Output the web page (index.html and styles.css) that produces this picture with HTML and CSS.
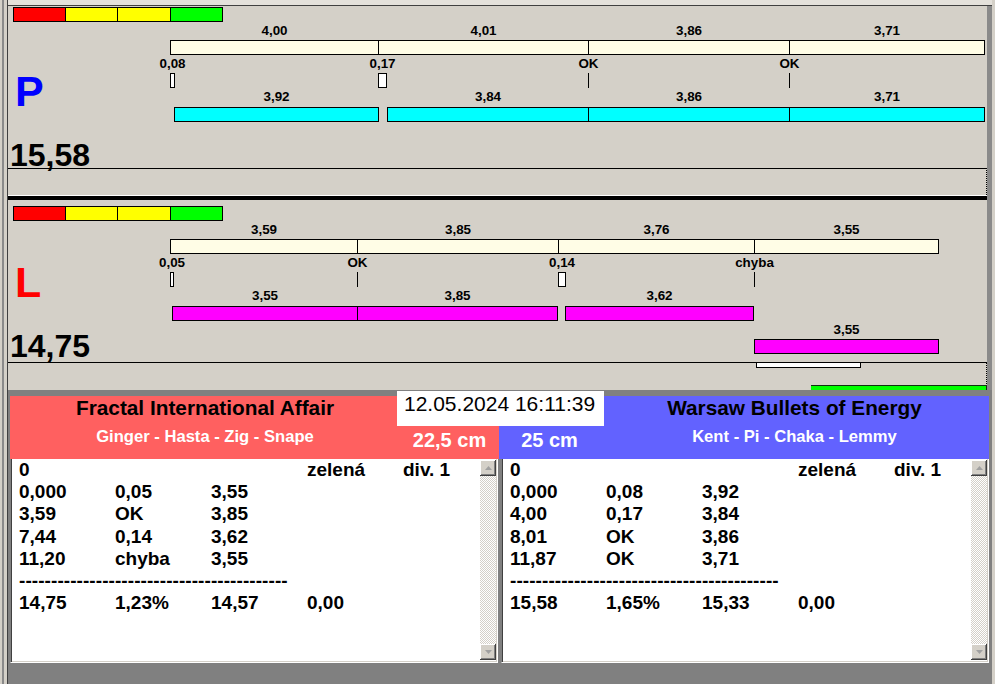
FILE: index.html
```html
<!DOCTYPE html>
<html>
<head>
<meta charset="utf-8">
<link rel="stylesheet" href="styles.css">
</head>
<body>
<div class="win">
  <div class="topbar"></div>
  <div class="main">
    <section class="lane lane-p">
      <div class="cbar"><i class="c-r"></i><i class="c-y"></i><i class="c-y c-y2"></i><i class="c-g"></i></div>
      <div class="lane-body">
        <div class="side">
          <div class="letter letter-p">P</div>
          <div class="total">15,58</div>
        </div>
        <div class="chart">
          <div class="track">
            <div class="seg" style="width:209px"><div class="lbl">4,00</div><div class="bar cream"></div><div class="bnd" style="width:5px"><span class="lbl">0,08</span><i class="mk"></i></div></div>
            <div class="seg" style="margin-left:-1px;width:211px"><div class="lbl">4,01</div><div class="bar cream"></div><div class="bnd" style="width:9px"><span class="lbl">0,17</span><i class="mk"></i></div></div>
            <div class="seg" style="margin-left:-1px;width:202px"><div class="lbl">3,86</div><div class="bar cream"></div><div class="bnd" style="width:1px"><span class="lbl">OK</span><i class="mk ln"></i></div></div>
            <div class="seg" style="margin-left:-1px;width:196px"><div class="lbl">3,71</div><div class="bar cream"></div><div class="bnd" style="width:1px"><span class="lbl">OK</span><i class="mk ln"></i></div></div>
          </div>
          <div class="track low">
            <div class="seg" style="margin-left:4px;width:205px"><div class="lbl">3,92</div><div class="bar cyan"></div></div>
            <div class="seg" style="margin-left:8px;width:202px"><div class="lbl">3,84</div><div class="bar cyan"></div></div>
            <div class="seg" style="margin-left:-1px;width:202px"><div class="lbl">3,86</div><div class="bar cyan"></div></div>
            <div class="seg" style="margin-left:-1px;width:196px"><div class="lbl">3,71</div><div class="bar cyan"></div></div>
          </div>
        </div>
      </div>
      <div class="foot foot-p"></div>
    </section>
    <div class="sep"></div>
    <section class="lane lane-l">
      <div class="cbar"><i class="c-r"></i><i class="c-y"></i><i class="c-y c-y2"></i><i class="c-g"></i></div>
      <div class="lane-body">
        <div class="side">
          <div class="letter letter-l">L</div>
          <div class="total">14,75</div>
        </div>
        <div class="chart">
          <div class="track">
            <div class="seg" style="width:188px"><div class="lbl">3,59</div><div class="bar cream"></div><div class="bnd" style="width:4px"><span class="lbl">0,05</span><i class="mk"></i></div></div>
            <div class="seg" style="margin-left:-1px;width:202px"><div class="lbl">3,85</div><div class="bar cream"></div><div class="bnd" style="width:1px"><span class="lbl">OK</span><i class="mk ln"></i></div></div>
            <div class="seg" style="margin-left:-1px;width:197px"><div class="lbl">3,76</div><div class="bar cream"></div><div class="bnd" style="width:8px"><span class="lbl">0,14</span><i class="mk"></i></div></div>
            <div class="seg" style="margin-left:-1px;width:185px"><div class="lbl">3,55</div><div class="bar cream"></div><div class="bnd" style="width:1px"><span class="lbl">chyba</span><i class="mk ln"></i></div></div>
          </div>
          <div class="track low">
            <div class="seg" style="margin-left:2px;width:186px"><div class="lbl">3,55</div><div class="bar magenta"></div></div>
            <div class="seg" style="margin-left:-1px;width:201px"><div class="lbl">3,85</div><div class="bar magenta"></div></div>
            <div class="seg" style="margin-left:7px;width:189px"><div class="lbl">3,62</div><div class="bar magenta"></div></div>
          </div>
          <div class="track extra">
            <div class="seg" style="margin-left:584px;width:185px"><div class="lbl">3,55</div><div class="bar magenta"></div></div>
          </div>
        </div>
      </div>
      <div class="foot foot-l">
        <div class="cut" style="margin-left:748px;width:105px"></div>
        <div class="gbar" style="margin-left:803px;width:176px"></div>
      </div>
    </section>
    <div class="bottom">
      <div class="teams">
        <div class="team team-red">
          <div class="t-main">
            <div class="t-title">Fractal International Affair</div>
            <div class="t-sub">Ginger - Hasta - Zig - Snape</div>
          </div>
          <div class="t-side"><span class="t-cm">22,5 cm</span></div>
        </div>
        <div class="team team-blue">
          <div class="t-side t-side-b"><span class="t-cm">25 cm</span></div>
          <div class="t-main">
            <div class="t-title">Warsaw Bullets of Energy</div>
            <div class="t-sub">Kent - Pi - Chaka - Lemmy</div>
          </div>
        </div>
        <div class="date">12.05.2024 16:11:39</div>
      </div>
      <div class="lists">
        <div class="list">
          <div class="list-body">
            <div class="row"><span>0</span><span></span><span></span><span>zelená</span><span>div. 1</span></div>
            <div class="row"><span>0,000</span><span>0,05</span><span>3,55</span></div>
            <div class="row"><span>3,59</span><span>OK</span><span>3,85</span></div>
            <div class="row"><span>7,44</span><span>0,14</span><span>3,62</span></div>
            <div class="row"><span>11,20</span><span>chyba</span><span>3,55</span></div>
            <div class="row dash">------------------------------------------</div>
            <div class="row"><span>14,75</span><span>1,23%</span><span>14,57</span><span>0,00</span></div>
          </div>
          <div class="sb">
            <div class="sb-btn"><svg width="7" height="4" viewBox="0 0 7 4"><polygon points="3.5,0 7,4 0,4" fill="#a0a0a0"/></svg></div>
            <div class="sb-track"></div>
            <div class="sb-btn"><svg width="7" height="4" viewBox="0 0 7 4"><polygon points="0,0 7,0 3.5,4" fill="#a0a0a0"/></svg></div>
          </div>
        </div>
        <div class="list">
          <div class="list-body">
            <div class="row"><span>0</span><span></span><span></span><span>zelená</span><span>div. 1</span></div>
            <div class="row"><span>0,000</span><span>0,08</span><span>3,92</span></div>
            <div class="row"><span>4,00</span><span>0,17</span><span>3,84</span></div>
            <div class="row"><span>8,01</span><span>OK</span><span>3,86</span></div>
            <div class="row"><span>11,87</span><span>OK</span><span>3,71</span></div>
            <div class="row dash">------------------------------------------</div>
            <div class="row"><span>15,58</span><span>1,65%</span><span>15,33</span><span>0,00</span></div>
          </div>
          <div class="sb">
            <div class="sb-btn"><svg width="7" height="4" viewBox="0 0 7 4"><polygon points="3.5,0 7,4 0,4" fill="#a0a0a0"/></svg></div>
            <div class="sb-track"></div>
            <div class="sb-btn"><svg width="7" height="4" viewBox="0 0 7 4"><polygon points="0,0 7,0 3.5,4" fill="#a0a0a0"/></svg></div>
          </div>
        </div>
      </div>
    </div>
  </div>
</div>
</body>
</html>
```

FILE: styles.css
```css
html, body {
  margin: 0;
  padding: 0;
  width: 995px;
  height: 684px;
  overflow: hidden;
  background: #d4d0c8;
  font-family: "Liberation Sans", Arial, sans-serif;
  color: #000;
}

.win {
  width: 995px;
  height: 684px;
  display: flex;
  flex-direction: column;
  background:
    linear-gradient(to right, #d4d0c8 0 2px, #8a8a8a 2px 4px, #d4d0c8 4px 7px, #404040 7px 8px, transparent 8px),
    #d4d0c8;
}

.topbar {
  height: 5px;
  margin-left: 8px;
  margin-right: 3px;
  background: #e4e1db;
  border-bottom: 1px solid #404040;
  flex: none;
}

.main {
  margin-left: 8px;
  width: 984px;
  flex: 1;
  background: #8a8a8a;
  display: flex;
  flex-direction: column;
}

.lane {
  width: 979px;
  background: #d4d0c8;
  flex: none;
}

.lane-p .cbar { margin-top: 1px; }
.lane-l .cbar { margin-top: 6px; }

.cbar {
  display: flex;
  width: 210px;
  height: 15px;
  box-sizing: border-box;
  border: 1px solid #000;
  margin-left: 5px;
}
.cbar i {
  display: block;
  height: 100%;
  box-sizing: border-box;
  border-right: 1px solid #000;
}
.c-r { width: 52px; background: #ff0000; }
.c-y { width: 52px; background: #ffff00; }
.c-y2 { width: 53px; }
.c-g { width: 51px; background: #00ff00; border-right: 0 !important; }

.lane-body {
  display: grid;
  grid-template-columns: 162px 1fr;
  align-items: start;
}

.side {
  display: flex;
  flex-direction: column;
  padding-left: 7px;
}

.letter {
  font-weight: bold;
  font-size: 43px;
  line-height: 43px;
  height: 43px;
}
.letter-p { color: #0000ff; margin-top: 48px; }
.letter-l { color: #ff0000; margin-top: 40px; }

.total {
  font-weight: bold;
  font-size: 32px;
  line-height: 32px;
  height: 32px;
  margin-top: 26px;
  margin-left: -5px;
  white-space: nowrap;
}
.lane-p .total { margin-bottom: -3px; }

.chart {
  display: flex;
  flex-direction: column;
}

.track {
  display: flex;
  align-items: flex-start;
}

.seg {
  flex: none;
  display: flex;
  flex-direction: column;
}

.lbl {
  display: block;
  height: 18px;
  line-height: 18px;
  font-size: 13.4px;
  font-weight: bold;
  text-align: center;
  white-space: nowrap;
}
.low .lbl { height: 19px; }

.bar {
  height: 15px;
  box-sizing: border-box;
  border: 1px solid #000;
}
.cream { background: #fffde6; }
.cyan { background: #00ffff; }
.magenta { background: #ff00ff; }

.bnd {
  display: flex;
  flex-direction: column;
  align-items: center;
}
.mk {
  display: block;
  align-self: stretch;
  height: 15px;
  box-sizing: border-box;
  border: 1px solid #000;
  background: #fff;
}
.mk.ln {
  border-width: 0 0 0 1px;
  background: transparent;
}

.foot {
  box-sizing: border-box;
  border-top: 1px solid #000;
  border-right: 1px dotted #000;
}
.foot-p { height: 27px; }
.foot-l {
  height: 28px;
  display: flex;
  flex-direction: column;
  align-items: flex-start;
}

.cut {
  height: 6px;
  margin-top: -1px;
  box-sizing: border-box;
  border: 1px solid #000;
  background: #fff;
}
.gbar {
  height: 5px;
  margin-top: 17px;
  box-sizing: border-box;
  background: #00ff00;
  border: 1px solid #103010;
  border-width: 1px 1px 0 0;
}

.sep {
  width: 979px;
  height: 4px;
  background: #000;
  border-top: 1px solid #fff;
  flex: none;
}

.bottom {
  flex: 1;
  background: #808080;
  padding: 6px 0 0 2px;
  display: flex;
  flex-direction: column;
}

.teams {
  position: relative;
  display: flex;
  height: 63px;
  flex: none;
}

.team {
  display: flex;
  height: 100%;
}
.team-red { width: 489px; background: #ff6060; }
.team-blue { width: 490px; background: #6262ff; }

.t-main {
  text-align: center;
  white-space: nowrap;
}
.team-red .t-main { width: 390px; }
.team-blue .t-main { flex: 1; }

.t-title {
  font-weight: bold;
  font-size: 20.8px;
  line-height: 24px;
  color: #000;
}
.t-sub {
  font-weight: bold;
  font-size: 16.6px;
  line-height: 20px;
  margin-top: 7px;
  color: #fff;
}

.t-side {
  flex: 1;
  display: flex;
  align-items: flex-end;
  justify-content: center;
  padding-bottom: 7px;
}
.t-side-b { flex: none; width: 101px; }
.t-cm {
  font-weight: bold;
  font-size: 20px;
  line-height: 24px;
  color: #fff;
  white-space: nowrap;
}

.date {
  position: absolute;
  left: 387px;
  top: -5px;
  width: 207px;
  height: 35px;
  box-sizing: border-box;
  background: #fff;
  padding: 1px 0 0 7px;
  font-size: 21px;
  line-height: 24px;
  white-space: nowrap;
}

.lists {
  display: flex;
  gap: 3px;
  flex: none;
}

.list {
  width: 488px;
  height: 204px;
  box-sizing: border-box;
  display: flex;
  background: #fff;
  border-left: 1px solid #808080;
  border-right: 1px solid #ffffff;
  border-bottom: 1px solid #ffffff;
  box-shadow: inset 1px 0 #404040, inset -1px -1px #d4d0c8;
  padding: 0 1px 1px 1px;
}

.list-body {
  flex: 1;
  min-width: 0;
  overflow: hidden;
  padding-left: 7px;
  font-weight: bold;
  font-size: 19px;
  line-height: 22.2px;
}

.row {
  display: grid;
  grid-template-columns: repeat(5, 96px);
  white-space: nowrap;
}
.row.dash {
  display: block;
  letter-spacing: 0.07px;
}

.sb {
  width: 16px;
  flex: none;
  display: flex;
  flex-direction: column;
  padding: 1px 0;
}
.sb-track {
  flex: 1;
  background: repeating-conic-gradient(#ffffff 0 25%, #d4d0c8 0 50%) 0 0 / 2px 2px;
}
.sb-btn {
  height: 16px;
  flex: none;
  background: #d4d0c8;
  display: flex;
  align-items: center;
  justify-content: center;
  box-shadow: inset -1px -1px #404040, inset 1px 1px #ffffff, inset -2px -2px #808080;
}
```
